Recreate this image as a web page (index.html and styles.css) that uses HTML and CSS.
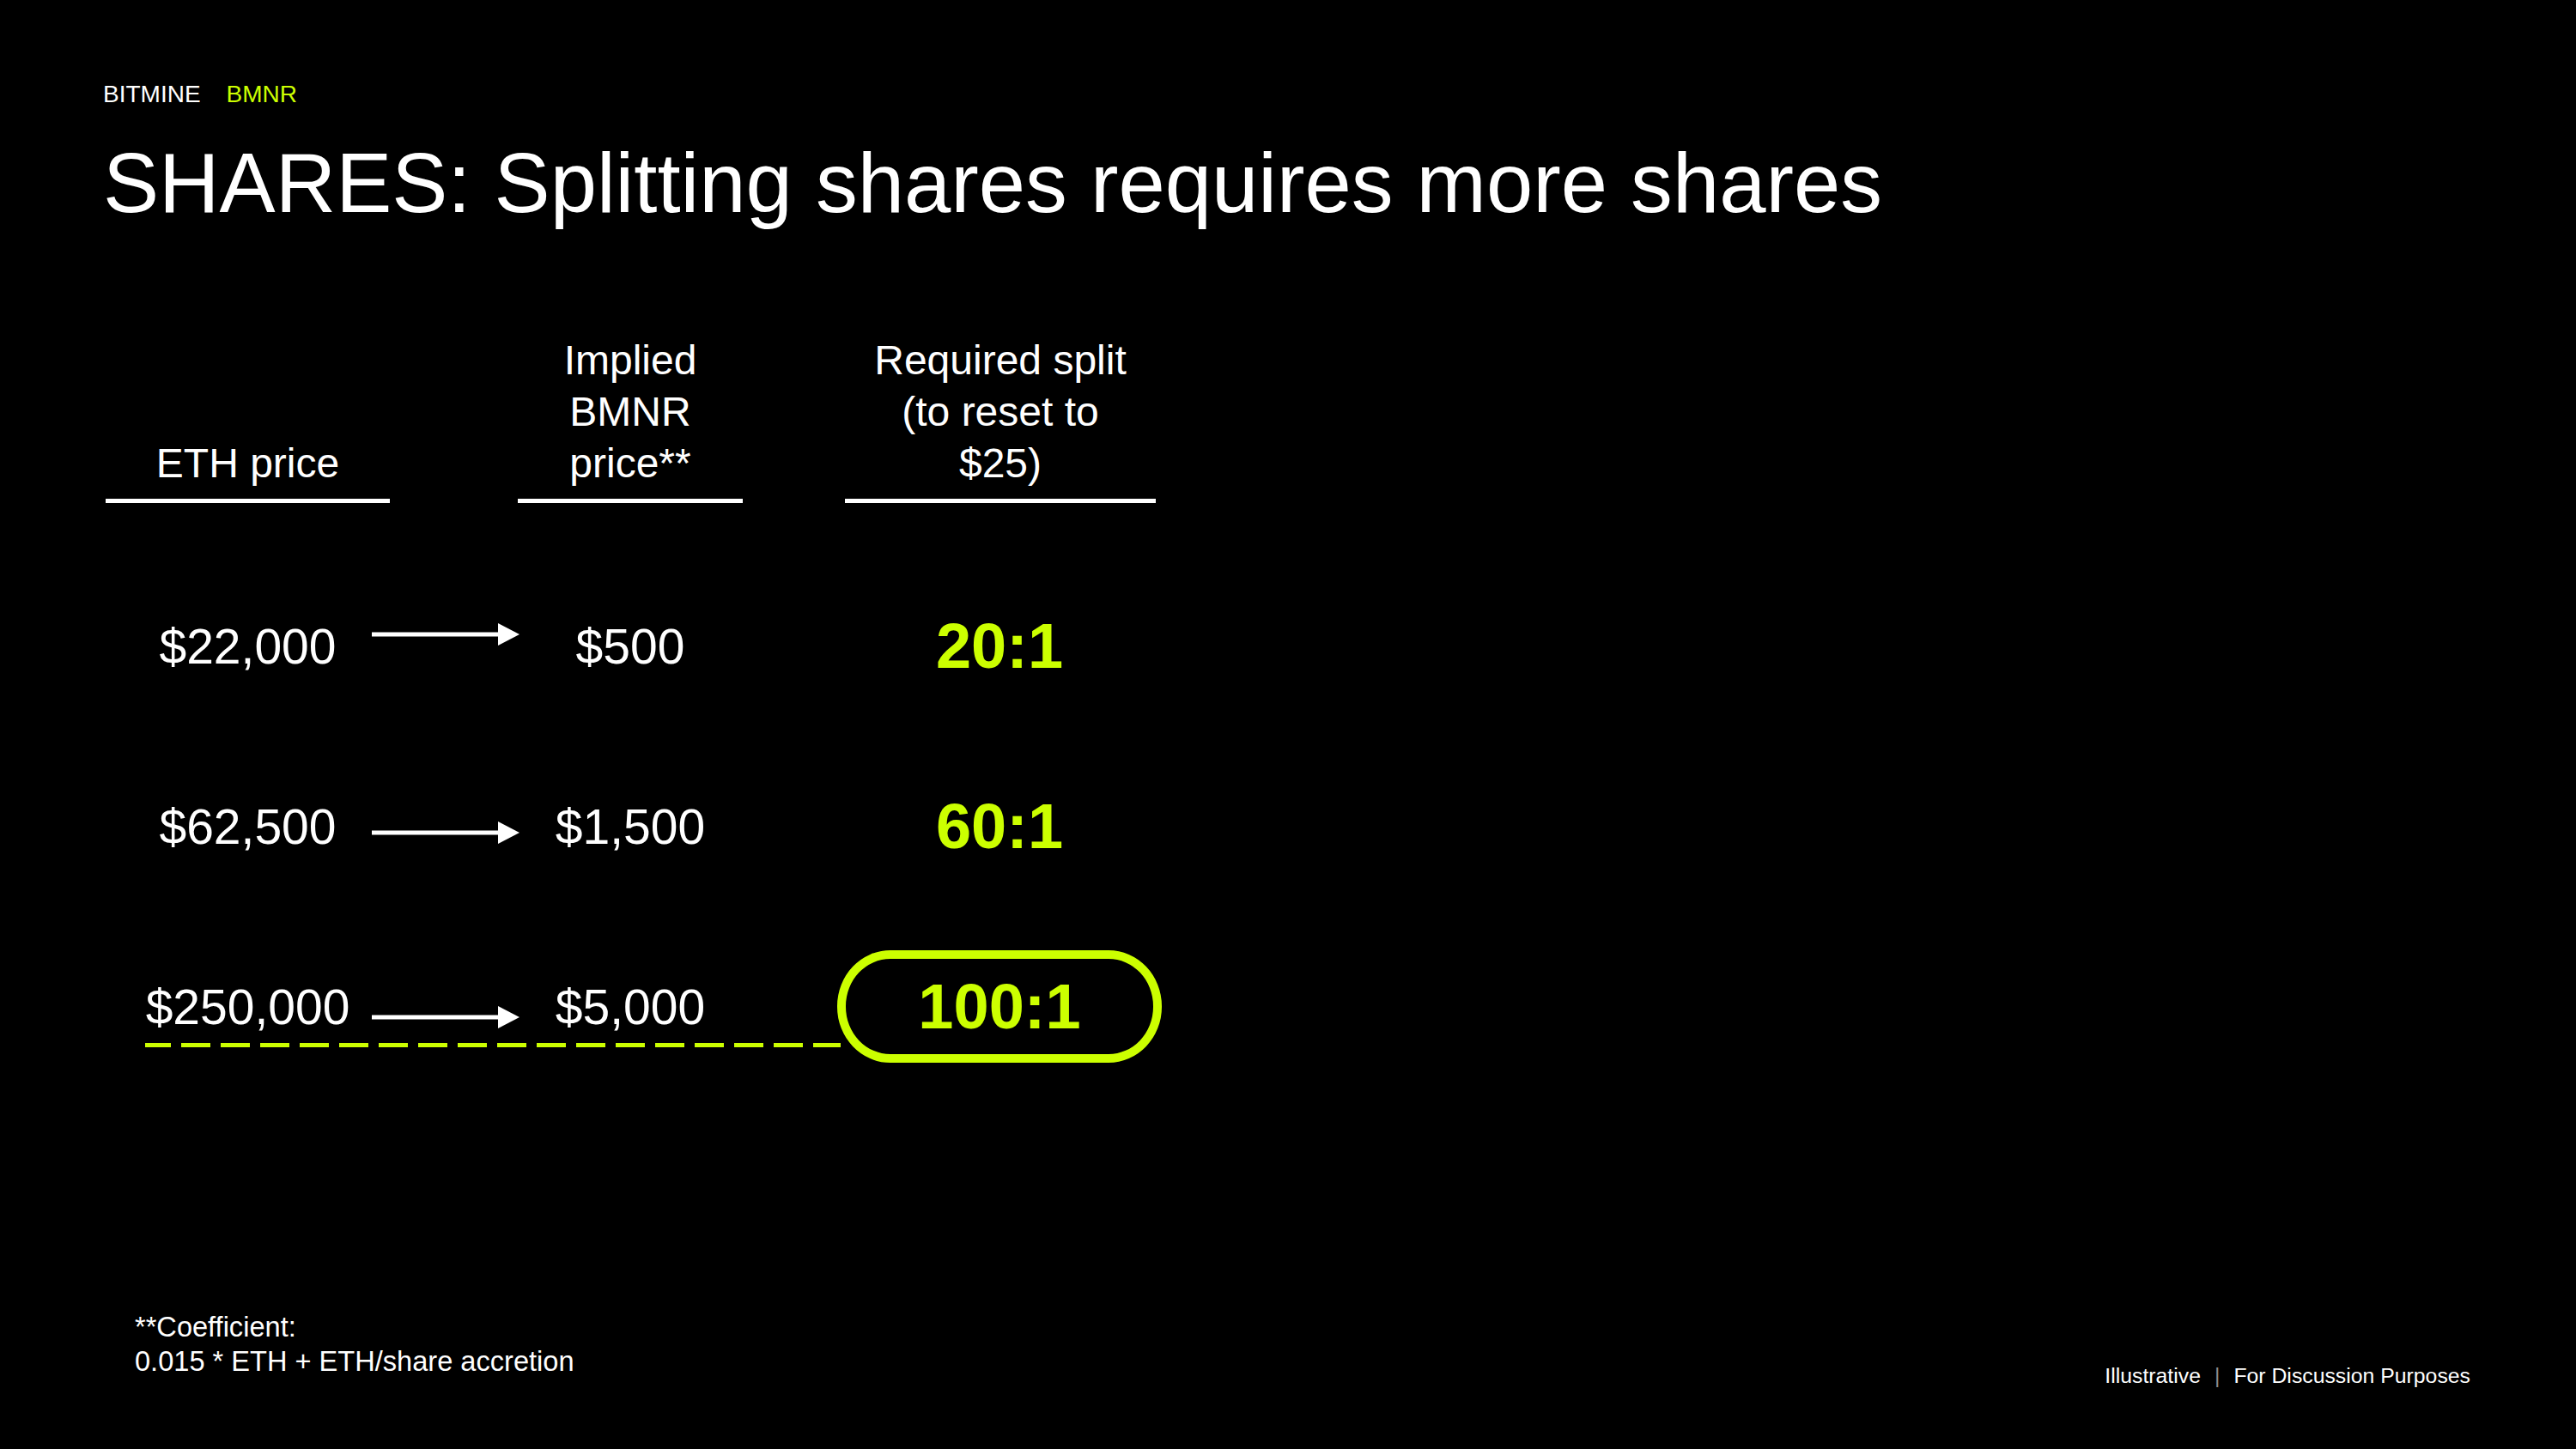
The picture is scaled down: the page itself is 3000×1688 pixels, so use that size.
FILE: index.html
```html
<!DOCTYPE html>
<html lang="en">
<head>
<meta charset="utf-8">
<title>SHARES: Splitting shares requires more shares</title>
<link rel="stylesheet" href="styles.css">
</head>
<body>
<div class="page">
  <div class="brand">
    <span class="brand-name">BITMINE</span>
    <span class="brand-ticker">BMNR</span>
  </div>
  <h1 class="title">SHARES: Splitting shares requires more shares</h1>

  <div class="table">
    <div class="head">
      <div class="th c1">ETH price</div>
      <div class="th c2">Implied<br>BMNR<br>price**</div>
      <div class="th c3">Required split<br>(to reset to<br>$25)</div>
    </div>

    <div class="rows">
      <div class="row">
        <div class="val c1">$22,000</div>
        <svg class="arrow arrow-a" width="172" height="26" viewBox="0 0 172 26"><rect x="0" y="10.5" width="149" height="5" fill="#fff"/><polygon points="147,0 172,13 147,26" fill="#fff"/></svg>
        <div class="val c2">$500</div>
        <div class="ratio c3">20:1</div>
      </div>
      <div class="row">
        <div class="val c1">$62,500</div>
        <svg class="arrow arrow-b" width="172" height="26" viewBox="0 0 172 26"><rect x="0" y="10.5" width="149" height="5" fill="#fff"/><polygon points="147,0 172,13 147,26" fill="#fff"/></svg>
        <div class="val c2">$1,500</div>
        <div class="ratio c3">60:1</div>
      </div>
      <div class="row">
        <div class="dash"></div>
        <div class="val c1">$250,000</div>
        <svg class="arrow arrow-c" width="172" height="26" viewBox="0 0 172 26"><rect x="0" y="10.5" width="149" height="5" fill="#fff"/><polygon points="147,0 172,13 147,26" fill="#fff"/></svg>
        <div class="val c2">$5,000</div>
        <div class="ratio ring c3">100:1</div>
      </div>
    </div>
  </div>

  <div class="footer">
    <div class="footnote">**Coefficient:<br>0.015 * ETH + ETH/share accretion</div>
    <div class="disclaimer">Illustrative<span class="sep">|</span>For Discussion Purposes</div>
  </div>
</div>
</body>
</html>
```

FILE: styles.css
```css
html, body {
  margin: 0;
  padding: 0;
  background: #000;
}

.page {
  box-sizing: border-box;
  width: 3000px;
  height: 1688px;
  overflow: hidden;
  padding: 93px 123px 0 120px;
  font-family: "Liberation Sans", Arial, Helvetica, sans-serif;
  color: #fff;
  background: #000;
}

.brand {
  display: flex;
  gap: 30px;
  font-size: 28px;
  line-height: 34px;
}

.brand-ticker {
  color: #ccff00;
}

.title {
  margin: 32px 0 0 0;
  font-size: 97.6px;
  line-height: 110px;
  font-weight: 400;
  white-space: nowrap;
}

.table {
  margin: 121px 0 0 3px;
}

.head,
.row {
  display: grid;
  grid-template-columns: 331px 149px 262px 119px 362px;
}

.head {
  align-items: end;
}

.th {
  text-align: center;
  font-size: 48px;
  line-height: 60px;
  padding-bottom: 11px;
  border-bottom: 5px solid #fff;
}

.c1 { grid-column: 1; }
.c2 { grid-column: 3; }
.c3 { grid-column: 5; }

.rows {
  display: flex;
  flex-direction: column;
  gap: 79px;
  margin-top: 101px;
}

.row {
  height: 131px;
  align-items: center;
  justify-items: center;
}

.row > * {
  grid-row: 1;
}

.val {
  font-size: 57px;
  line-height: 70px;
  white-space: nowrap;
}

.arrow {
  grid-column: 2;
  justify-self: start;
  align-self: start;
  margin-left: -21px;
  display: block;
}

.arrow-a { margin-top: 39px; }
.arrow-b { margin-top: 60px; }
.arrow-c { margin-top: 65px; }

.ratio {
  box-sizing: border-box;
  width: 378px;
  height: 131px;
  border: 10px solid transparent;
  border-radius: 62px / 65px;
  display: flex;
  align-items: center;
  justify-content: center;
  font-size: 74px;
  font-weight: 700;
  color: #ccff00;
  margin-left: -2px;
}

.ring {
  border-color: #ccff00;
}

.dash {
  grid-column: 1 / 5;
  justify-self: stretch;
  align-self: end;
  height: 5px;
  margin: 0 5px 18px 46px;
  background: repeating-linear-gradient(90deg, #ccff00 0 34px, transparent 34px 46px);
  background-position: -4px 0;
}

.footer {
  display: flex;
  justify-content: space-between;
  align-items: flex-start;
  margin-top: 288px;
}

.footnote {
  margin-left: 37px;
  font-size: 32.6px;
  line-height: 40px;
}

.disclaimer {
  margin-top: 62px;
  font-size: 24.8px;
  line-height: 30px;
  white-space: nowrap;
}

.sep {
  color: #8c8c8c;
  margin: 0 16px;
}
```
